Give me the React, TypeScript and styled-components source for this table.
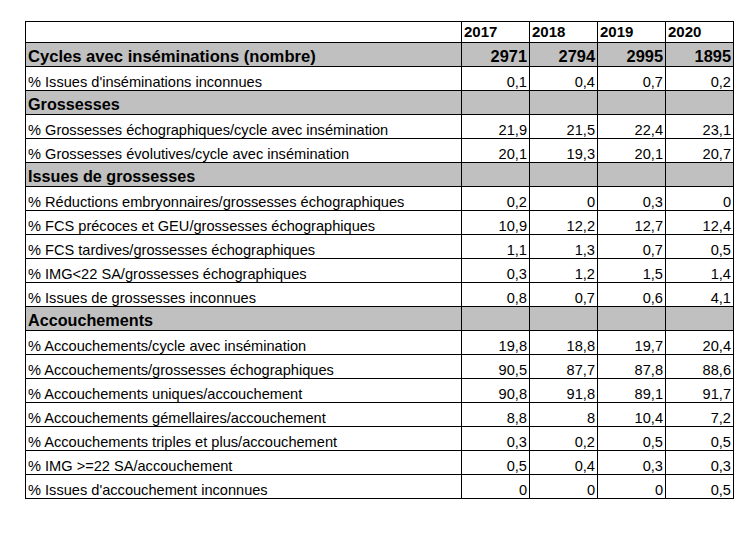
import React from "react";
import styled, { createGlobalStyle } from "styled-components";

const Global = createGlobalStyle`
  html, body { margin: 0; padding: 0; background: #ffffff; }
  body { font-family: "Liberation Sans", Arial, sans-serif; }
`;

const Page = styled.div`
  width: 756px;
  height: 540px;
  padding: 21px 0 0 25px;
  box-sizing: border-box;
  background: #fff;
`;

const Table = styled.table`
  border-collapse: collapse;
  table-layout: fixed;
  font-family: "Liberation Sans", Arial, sans-serif;
  font-size: 14.6px;
  color: #000;
`;

const Row = styled.tr<{ $section?: boolean; $head?: boolean }>`
  height: ${(p) => (p.$head ? 21 : 24)}px;
  background: ${(p) => (p.$section ? "#c0c0c0" : "#ffffff")};
`;

const Label = styled.td<{ $bold?: boolean; $big?: boolean }>`
  width: 433px;
  border: 1px solid #000;
  padding: 0 0 0 2px;
  vertical-align: bottom;
  white-space: nowrap;
  font-weight: ${(p) => (p.$bold ? 700 : 400)};
  font-size: ${(p) => (p.$big ? "16.6px" : p.$bold ? "16.2px" : "14.6px")};
  line-height: ${(p) => (p.$bold ? "19px" : "16px")};
`;

const Num = styled.td<{ $bold?: boolean; $left?: boolean }>`
  width: 63px;
  border: 1px solid #000;
  padding: 0 2px 0 2px;
  vertical-align: bottom;
  text-align: ${(p) => (p.$left ? "left" : "right")};
  font-weight: ${(p) => (p.$bold ? 700 : 400)};
  font-size: ${(p) => (p.$bold ? "16.4px" : "14.6px")};
  line-height: ${(p) => (p.$bold ? "19px" : "16px")};
`;

const Head = styled(Num)`
  font-size: 15px;
  line-height: 17px;
  vertical-align: middle;
  padding-bottom: 1px;
`;

type R = { label: string; values?: (string | number)[]; section?: boolean; bold?: boolean };

const rows: R[] = [
  { label: "Cycles avec inséminations (nombre)", values: [2971, 2794, 2995, 1895], section: true, bold: true },
  { label: "% Issues d'inséminations inconnues", values: ["0,1", "0,4", "0,7", "0,2"] },
  { label: "Grossesses", section: true },
  { label: "% Grossesses échographiques/cycle avec insémination", values: ["21,9", "21,5", "22,4", "23,1"] },
  { label: "% Grossesses évolutives/cycle avec insémination", values: ["20,1", "19,3", "20,1", "20,7"] },
  { label: "Issues de grossesses", section: true },
  { label: "% Réductions embryonnaires/grossesses échographiques", values: ["0,2", "0", "0,3", "0"] },
  { label: "% FCS précoces et GEU/grossesses échographiques", values: ["10,9", "12,2", "12,7", "12,4"] },
  { label: "% FCS tardives/grossesses échographiques", values: ["1,1", "1,3", "0,7", "0,5"] },
  { label: "% IMG<22 SA/grossesses échographiques", values: ["0,3", "1,2", "1,5", "1,4"] },
  { label: "% Issues de grossesses inconnues", values: ["0,8", "0,7", "0,6", "4,1"] },
  { label: "Accouchements", section: true },
  { label: "% Accouchements/cycle avec insémination", values: ["19,8", "18,8", "19,7", "20,4"] },
  { label: "% Accouchements/grossesses échographiques", values: ["90,5", "87,7", "87,8", "88,6"] },
  { label: "% Accouchements uniques/accouchement", values: ["90,8", "91,8", "89,1", "91,7"] },
  { label: "% Accouchements gémellaires/accouchement", values: ["8,8", "8", "10,4", "7,2"] },
  { label: "% Accouchements triples et plus/accouchement", values: ["0,3", "0,2", "0,5", "0,5"] },
  { label: "% IMG >=22 SA/accouchement", values: ["0,5", "0,4", "0,3", "0,3"] },
  { label: "% Issues d'accouchement inconnues", values: ["0", "0", "0", "0,5"] },
];

const years = ["2017", "2018", "2019", "2020"];

export default function App() {
  return (
    <>
      <Global />
      <Page>
        <Table>
          <tbody>
            <Row $head>
              <Label />
              {years.map((y) => (
                <Head key={y} $bold $left>
                  {y}
                </Head>
              ))}
            </Row>
            {rows.map((r) => (
              <Row key={r.label} $section={r.section}>
                <Label $bold={r.section} $big={r.bold}>
                  {r.label}
                </Label>
                {(r.values ?? ["", "", "", ""]).map((v, i) => (
                  <Num key={i} $bold={r.bold}>
                    {v}
                  </Num>
                ))}
              </Row>
            ))}
          </tbody>
        </Table>
      </Page>
    </>
  );
}
